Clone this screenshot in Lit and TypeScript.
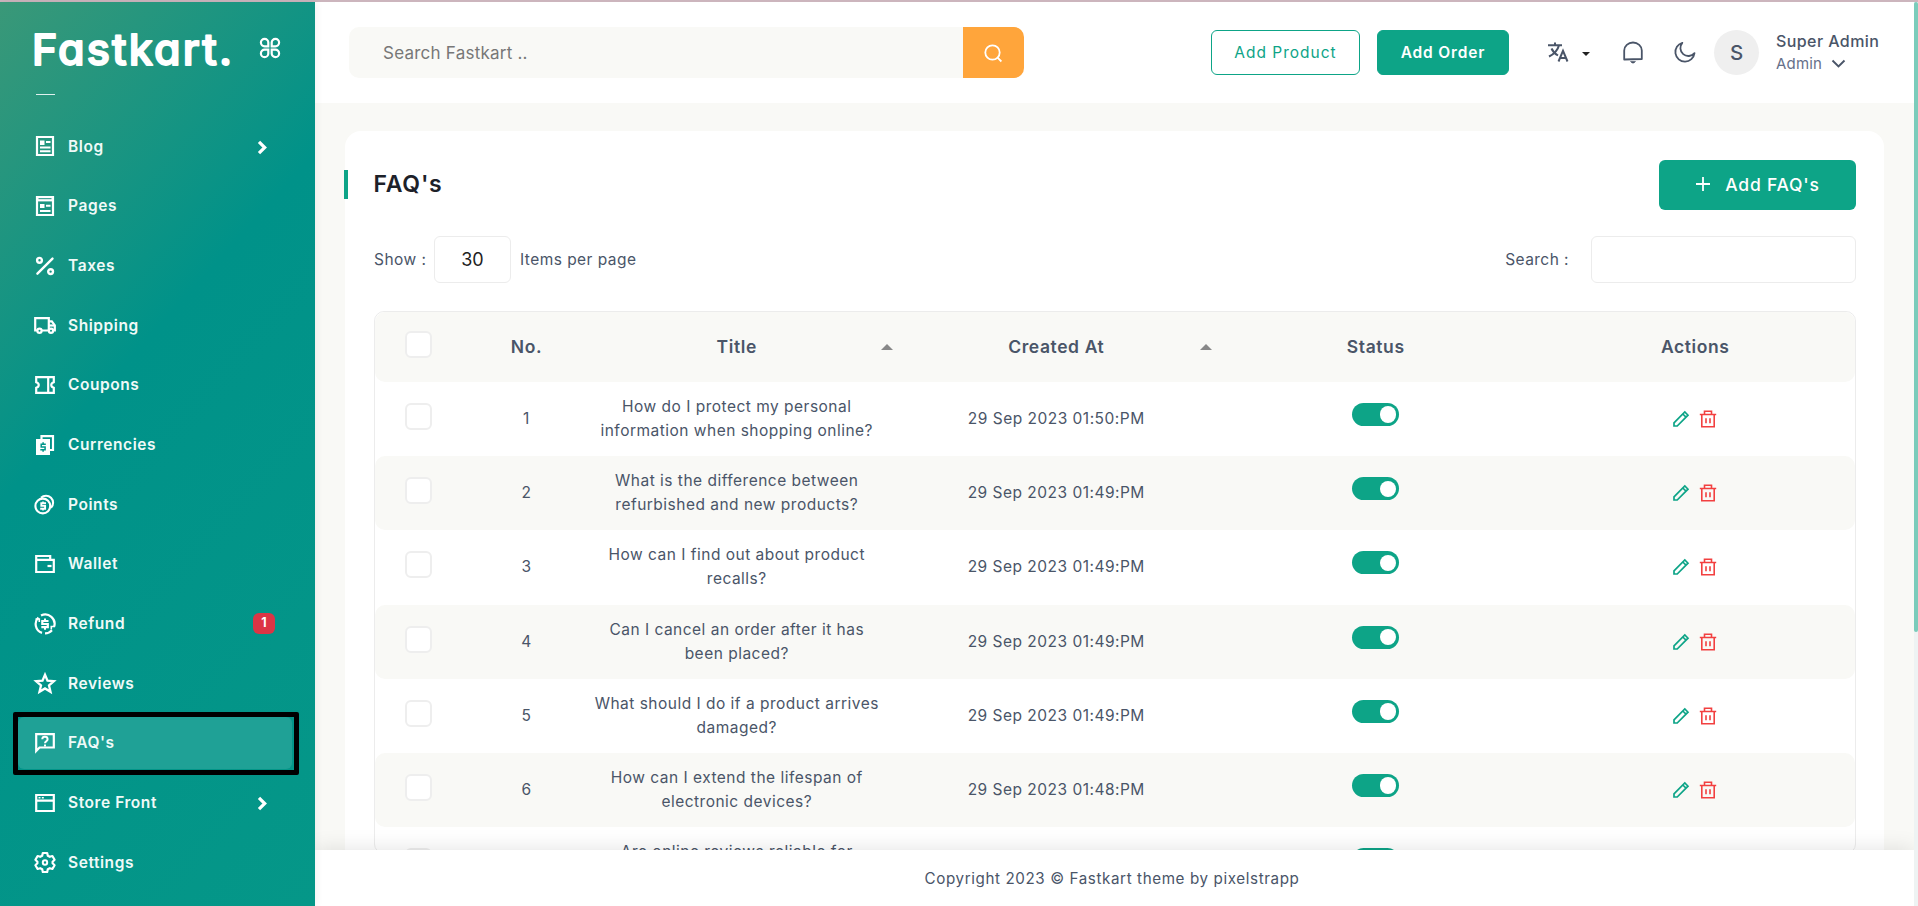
import { LitElement, html, css, svg } from "lit";
import { customElement } from "lit/decorators.js";

const doc = svg`<path d="M4 3h16v18H4z" fill="none" stroke="currentColor" stroke-width="2.2"/>`;
const icons: Record<string, unknown> = {
  blog: svg`${doc}<path d="M7 6.500h4.500V11H7zM13 7h4.500v2H13zM7 12.500h10.500v2H7zM7 16.200h10.500v2H7z" fill="currentColor"/>`,
  pages: svg`${doc}<path d="M4 4h16v3.400H4z" fill="currentColor"/><path d="M5.500 4.700h13" stroke="#159181" stroke-width="1"/><path d="M7 10h4.500v4H7zM13 10.800h4.500v2H13zM7 16h10.500v2H7z" fill="currentColor"/>`,
  taxes: svg`<g fill="none" stroke="currentColor" stroke-width="2.400"><path d="M4.400 19.700 19.500 4.600" stroke-linecap="round"/><circle cx="6.500" cy="6.300" r="2.400"/><circle cx="17.600" cy="17.600" r="2.400"/></g>`,
  shipping: svg`<g fill="none" stroke="currentColor" stroke-width="2.200"><path d="M4.500 17.500H2.200V5.200h13.600v12.300H8.500M15.800 8.300h3l3 4v5.200h-1.500"/><circle cx="6.500" cy="17.800" r="2.100"/><circle cx="18" cy="17.800" r="2.100"/><path d="M16 12.500h6"/></g>`,
  coupons: svg`<path d="M3.200 4.200h17.600v5c-3.400 1-3.400 4.600 0 5.600v5H3.200v-5c3.400-1 3.400-4.600 0-5.600zM15.200 4.500v15.500" fill="none" stroke="currentColor" stroke-width="2.200"/>`,
  currencies: svg`<path d="M8.500 6V3.200H20V17h-3" fill="none" stroke="currentColor" stroke-width="2.200"/><path d="M3 6h14v16H3z" fill="currentColor"/><path d="M12.800 11.300H8.200v2.700h3.900v2.700H7.300M10.100 9.300v2M10.100 16.700v2" fill="none" stroke="#00958a" stroke-width="1.500"/>`,
  points: svg`<g fill="none" stroke="currentColor" stroke-width="2.100"><circle cx="9.800" cy="14" r="7.400"/><path d="M8 5.800a7 7 0 1 1 10 10"/><path d="M13 11.200H8.300v2.700h3.800v2.800H7.200" stroke-width="1.900"/><path d="M10 9.500v2M10 16.500v2" stroke-width="1.500"/></g>`,
  wallet: svg`<g fill="none" stroke="currentColor" stroke-width="2.200"><path d="M3.200 8V4h14v4M3.200 7.800h17.600V20H3.200z"/><path d="M14.500 14h4"/></g>`,
  refund: svg`<g fill="none" stroke="currentColor" stroke-width="2.200"><path d="M9 20.900A9.300 9.300 0 0 1 5.400 5.500M8 3.600a9.300 9.300 0 0 1 13 11.400M19 18.300a9.300 9.300 0 0 1-7 3.100"/><path d="M15.500 9H9.300v3h5.500v3.200H8.300" stroke-width="2.200"/><path d="M12 6.500v2.500M12 15v2.700" stroke-width="2"/><path d="M2.500 7h3.800v3M21.800 14.500h-3.500v3" stroke-width="1.600"/></g>`,
  reviews: svg`<path d="m12 3.200 2.500 6 6.400.5-4.900 4.300 1.500 6.300-5.500-3.400-5.500 3.400 1.500-6.300L3.100 9.700l6.400-.5z" transform="translate(0 .5)" fill="none" stroke="currentColor" stroke-width="2.300"/>`,
  faq: svg`<path d="M3.200 20V3.200h17.600v13.300H6.500z" fill="none" stroke="currentColor" stroke-width="2.200"/><path d="M9.300 8.300c0-3.300 5.300-3.300 5.300 0 0 2-2.600 2-2.600 4M12 13.400v2" fill="none" stroke="currentColor" stroke-width="2"/>`,
  store: svg`<g fill="none" stroke="currentColor" stroke-width="2.200"><path d="M3.200 4h17.600v16H3.200zM3.200 9.700h17.600"/><path d="M5.500 6.800h2M8.800 6.800h2" stroke-width="1.500"/></g>`,
  settings: svg`<path d="m9.800 3-.6 2.700-2 1.100-2.600-.8-2.200 3.800 2 1.900v1.600l-2 1.900 2.200 3.800 2.600-.8 2 1.100.6 2.700h4.400l.6-2.700 2-1.100 2.600.8 2.200-3.800-2-1.900v-1.600l2-1.900L19.400 6l-2.600.8-2-1.100-.6-2.700z" fill="none" stroke="currentColor" stroke-width="2.200" stroke-linejoin="round"/><circle cx="12" cy="12.500" r="2.200" fill="none" stroke="currentColor" stroke-width="2"/>`,
};

const nav = [
  ["blog", "Blog", "arrow"], ["pages", "Pages"], ["taxes", "Taxes"], ["shipping", "Shipping"],
  ["coupons", "Coupons"], ["currencies", "Currencies"], ["points", "Points"], ["wallet", "Wallet"],
  ["refund", "Refund", "badge"], ["reviews", "Reviews"], ["faq", "FAQ's", "active"],
  ["store", "Store Front", "arrow"], ["settings", "Settings"],
];

const rows = [
  ["How do I protect my personal", "information when shopping online?", "29 Sep 2023 01:50:PM"],
  ["What is the difference between", "refurbished and new products?", "29 Sep 2023 01:49:PM"],
  ["How can I find out about product", "recalls?", "29 Sep 2023 01:49:PM"],
  ["Can I cancel an order after it has", "been placed?", "29 Sep 2023 01:49:PM"],
  ["What should I do if a product arrives", "damaged?", "29 Sep 2023 01:49:PM"],
  ["How can I extend the lifespan of", "electronic devices?", "29 Sep 2023 01:48:PM"],
  ["Are online reviews reliable for", "", ""],
];

@customElement("side-nav")
class SideNav extends LitElement {
  static styles = css`
    :host { display: block; width: 315px; height: 100%; box-sizing: border-box; color: #fff;
      background: linear-gradient(132deg, #3a9878 0%, #009289 40%, #059788 100%); }
    .head { display: flex; align-items: center; height: 92px; padding-left: 30px; box-sizing: border-box; }
    .logo { display: block; width: 206px; height: 56px; }
    .logo text { font: 500 43px Inter, sans-serif; font-feature-settings: "cv11"; fill: #fff; stroke: #fff; stroke-width: 1.800; stroke-linejoin: round; stroke-linecap: round; }
    .clover { width: 22px; height: 22px; margin-left: 23px; }
    .rule { width: 19px; height: 1px; background: #dff1ee; margin-left: 36px; }
    .list { padding: 25.500px 23px 0 18px; }
    .item { display: flex; align-items: center; height: 51.660px; margin-bottom: 8px; padding-left: 15px; border-radius: 6px; box-sizing: border-box; }
    .item.active { background: #1fa196; position: relative; }
    .item.active::after { content: ""; position: absolute; inset: -5px -7px -6px -5px; border: 5px solid #000; border-radius: 2px; }
    .ico { width: 24px; height: 24px; flex: none; }
    .label { flex: 1; margin-left: 11px; font: 600 15.500px Inter, sans-serif; letter-spacing: .57px; color: #f0faf8; }
    .chev { width: 11px; height: 15px; margin-right: 24px; margin-top: 2px; }
    .badge { width: 22px; height: 21px; border-radius: 6px; background: #dc3545; font: 700 12.500px/19px Inter, sans-serif; text-align: center; margin-right: 17px; }
  `;
  render() {
    return html`
      <div class="head">
        <svg class="logo" viewBox="0 0 206 56"><text x="2" y="45" textLength="200">Fastkart.</text></svg>
        <svg class="clover" viewBox="0 0 22 22" fill="none" stroke="currentColor" stroke-width="2.200">
          <path d="M9.300 9.300H5.600a3.700 3.700 0 1 1 3.700-3.700zM12.700 9.300h3.700a3.700 3.700 0 1 0-3.700-3.700zM9.300 12.700H5.600a3.700 3.700 0 1 0 3.700 3.700zM12.700 12.700h3.700a3.700 3.700 0 1 1-3.700 3.700z"/>
        </svg>
      </div>
      <div class="rule"></div>
      <div class="list">
        ${nav.map(([icon, label, extra]) => html`
          <div class="item ${extra === "active" ? "active" : ""}">
            <svg class="ico" viewBox="0 0 24 24">${icons[icon]}</svg>
            <span class="label">${label}</span>
            ${extra === "arrow" ? html`<svg class="chev" viewBox="0 0 11 15" fill="none" stroke="#fff" stroke-width="3.200"><path d="m2 1.800 5.700 5.700L2 13.200"/></svg>` : ""}
            ${extra === "badge" ? html`<span class="badge">1</span>` : ""}
          </div>`)}
      </div>`;
  }
}

@customElement("top-bar")
class TopBar extends LitElement {
  static styles = css`
    :host { display: flex; align-items: center; height: 101px; background: #fff; padding: 0 0 0 34px; color: #4a5568; font-family: Inter, sans-serif; box-sizing: border-box; }
    .search { display: flex; flex: none; width: 675px; height: 51px; border-radius: 10px; overflow: hidden; background: #f9f9f6; }
    .ph { flex: 1; padding-left: 34px; font-size: 17px; line-height: 52px; color: #777; letter-spacing: .23px; }
    .go { width: 61px; display: grid; place-items: center; background: #ffa53b; }
    .go svg { margin-left: -2px; }
    .btn { flex: none; height: 45px; box-sizing: border-box; border: 1px solid #0da487; border-radius: 6px; display: grid; place-items: center; font-size: 15.500px; letter-spacing: 1px; color: #0da487; }
    .product { width: 149px; margin-left: 187px; }
    .order { width: 132px; margin-left: 17px; background: #0da487; color: #fff; font-weight: 600; letter-spacing: .85px; }
    .lang { flex: none; width: 22px; height: 22px; margin: 0 0 2px 38px; }
    .caret { flex: none; width: 8px; height: 4px; margin-left: 13px; margin-top: 3px; }
    .bell { flex: none; width: 24px; height: 24px; margin-left: 31px; margin-bottom: 1px; }
    .moon { flex: none; width: 24px; height: 24px; margin-left: 28px; margin-bottom: 2px; }
    .avatar { flex: none; width: 45px; height: 45px; border-radius: 50%; background: #efefef; margin-left: 17px; display: grid; place-items: center; font-weight: 500; font-size: 20.500px; line-height: 43px; }
    .who { margin-left: 17px; white-space: nowrap; }
    .name { font-size: 16px; font-weight: 500; line-height: 22px; letter-spacing: .42px; }
    .role { display: flex; align-items: center; font-size: 15px; line-height: 24px; color: #66708a; letter-spacing: .2px; }
    .down { width: 15px; height: 9px; margin-left: 9px; margin-top: -1px; }
  `;
  render() {
    return html`
      <div class="search"><div class="ph">Search Fastkart ..</div>
        <div class="go"><svg width="20" height="20" viewBox="0 0 20 20" fill="none" stroke="#fff" stroke-width="1.800"><circle cx="9.500" cy="9.500" r="7.200"/><path d="m14.600 14.700 3.800 3.800"/></svg></div>
      </div>
      <div class="btn product">Add Product</div>
      <div class="btn order">Add Order</div>
      <svg class="lang" viewBox="0 0 22 22" fill="none" stroke="currentColor" stroke-width="2"><path d="M1 4.200h14M8 1.500v2.700M12 4.200C10.800 9 7 13 2 15.500M4.500 7.500C6 11 8.500 13 11 14.500M11.500 20.500 16 9.800l4.500 10.700M13 17h6"/></svg>
      <svg class="caret" viewBox="0 0 8 4"><path d="M0 0h8L4 4z" fill="#222"/></svg>
      <svg class="bell" viewBox="0 0 24 24" fill="none" stroke="currentColor" stroke-width="1.800"><path d="M3.200 19.500V10.500a8.800 8 0 0 1 17.600 0v8.500z" stroke-linejoin="round"/><path d="M9.500 21.500h5l-1.500 1.500h-2z" fill="currentColor" stroke-width=".6"/></svg>
      <svg class="moon" viewBox="0 0 24 24" fill="none" stroke="currentColor" stroke-width="1.800"><path d="M9.300 2.800A9.600 9.600 0 1 0 21.500 13.200 6.900 6.900 0 0 1 9.300 2.800z" stroke-linejoin="round"/></svg>
      <div class="avatar">S</div>
      <div class="who"><div class="name">Super Admin</div>
        <div class="role">Admin<svg class="down" viewBox="0 0 15 9" fill="none" stroke="#4a5568" stroke-width="1.900"><path d="m1.500 1.500 6 6 6-6"/></svg></div></div>`;
  }
}

@customElement("faq-table")
class FaqTable extends LitElement {
  static styles = css`
    :host { display: block; border: 1px solid #ececec; border-radius: 10px; overflow: hidden; color: #4a5568; font-family: Inter, sans-serif; }
    .row { display: grid; grid-template-columns: 101px 101px repeat(4, 1fr); height: 74.200px; align-items: center; text-align: center; font-size: 15.500px; letter-spacing: .49px; border-radius: 10px; }
    .row.even { background: #f9f9f6; }
    .row.th { height: 70px; background: #f9f9f6; font-size: 17.500px; font-weight: 600; letter-spacing: .6px; line-height: 22px; }
    .th .lab { padding-bottom: 1px; }
    .check { width: 27px; height: 27px; box-sizing: border-box; border: 2px solid #eee; border-radius: 6px; background: #fff; margin: -5px 0 0 30px; }
    .title { line-height: 24px; white-space: nowrap; }
    .val { padding-bottom: 1px; }
    .head { display: grid; grid-template-columns: 15px 1fr 15px; align-items: center; padding-bottom: 1px; }
    .head .t { grid-column: 2; }
    .sort { width: 12px; height: 6px; margin-left: -1px; }
    .switch { display: flex; justify-content: flex-end; align-items: center; width: 47px; height: 23px; box-sizing: border-box; padding-right: 3px; border-radius: 12px; background: #0da487; margin: -9px auto 0; }
    .knob { width: 16.500px; height: 16.500px; border-radius: 50%; background: #fff; }
    .acts { display: flex; justify-content: center; gap: 9px; padding-right: 2px; }
    .acts svg { width: 18px; height: 18px; }
    .part { height: 26px; overflow: hidden; align-items: start; }
    .part .check { margin-top: 20.500px; }
    .part .title { padding-top: 13px; }
    .part .switch { margin-top: 20.500px; }
  `;
  render() {
    const arrow = html`<svg class="sort" viewBox="0 0 12 6"><path d="M0 6 6 0l6 6z" fill="#888"/></svg>`;
    return html`
      <div class="row th"><span class="check"></span><span class="lab">No.</span>
        <span class="head"><span class="t">Title</span>${arrow}</span>
        <span class="head"><span class="t">Created At</span>${arrow}</span>
        <span class="lab">Status</span><span class="lab">Actions</span></div>
      ${rows.map((r, i) => html`
        <div class="row ${i % 2 ? "even" : ""} ${r[2] ? "" : "part"}"><span class="check"></span><span class="val">${r[2] ? i + 1 : ""}</span>
          <span class="title">${r[0]}${r[1] ? html`<br>${r[1]}` : ""}</span><span class="val">${r[2]}</span>
          <span class="switch"><span class="knob"></span></span>
          ${r[2] ? html`<span class="acts">
            <svg viewBox="0 0 18 18" fill="none" stroke="#0da487" stroke-width="1.700"><path d="M2 16v-3.200L12.800 2 16 5.200 5.200 16zM10.800 4 14 7.200"/></svg>
            <svg viewBox="0 0 18 18" fill="none" stroke="#f24040" stroke-width="1.600"><path d="M.8 4.500h16.400M2.800 4.500v12.300h12.400V4.500M5.500 4.500V1.200h7v3.300M7 8.300v5M11 8.300v5"/></svg>
          </span>` : ""}
        </div>`)}`;
  }
}

@customElement("app-root")
class AppRoot extends LitElement {
  static styles = css`
    :host { display: grid; grid-template: 2px 1fr / 315px 1fr 4px; width: 1918px; height: 906px; overflow: hidden; background: #f9f9f6; color: #4a5568; font-family: Inter, sans-serif; }
    .strip { grid-column: 1 / -1; background: #ccb5bd; }
    side-nav { box-shadow: 0 0 9px rgba(0, 0, 0, .07); z-index: 1; }
    .main { display: grid; grid-template-rows: 101px 1fr 56px; height: 904px; min-width: 0; }
    .body { overflow: hidden; padding: 28px 30px 0 30px; }
    .card { background: #fff; border-radius: 16px; padding: 29px 28px 0 29px; height: 800px; box-sizing: border-box; }
    .top { display: flex; align-items: center; justify-content: space-between; height: 50px; }
    .h { font-size: 23px; font-weight: 600; color: #1d2129; letter-spacing: .8px; border-left: 4px solid #0da487; margin: -2px 0 0 -30px; padding-left: 25.500px; line-height: 29px; }
    .add { display: flex; align-items: center; justify-content: center; width: 197px; height: 50px; box-sizing: border-box; padding-bottom: 2px; border-radius: 6px; background: #0da487; color: #fff; font-size: 17.500px; font-weight: 500; letter-spacing: .8px; gap: 14px; }
    .filters { display: flex; align-items: center; height: 47px; margin: 26px 0 28px; font-size: 15.500px; letter-spacing: .45px; }
    .box { flex: none; height: 47px; box-sizing: border-box; border: 1px solid #ececec; border-radius: 6px; }
    .show { width: 51px; white-space: nowrap; }
    .num { width: 77px; margin: 0 9px; text-align: center; line-height: 45px; font-size: 18px; color: #222; letter-spacing: 0; }
    .find { margin-left: auto; }
    .q { width: 265px; margin-left: 22px; }
    .foot { display: grid; place-items: center; background: #fff; box-shadow: 0 0 22px rgba(0, 0, 0, .12); position: relative; font-size: 15.200px; letter-spacing: .6px; padding-right: 5px; clip-path: inset(-30px 0 0 0); }
    .track { background: #eef3f3; }
    .thumb { height: 630px; background: #7bccbb; border-radius: 4px; }
  `;
  render() {
    return html`
      <div class="strip"></div>
      <side-nav></side-nav>
      <div class="main">
        <top-bar></top-bar>
        <div class="body"><div class="card">
          <div class="top"><div class="h">FAQ's</div>
            <div class="add"><svg width="16" height="16" viewBox="0 0 16 16" stroke="#fff" stroke-width="1.800"><path d="M8 1v14M1 8h14"/></svg>Add FAQ's</div></div>
          <div class="filters"><span class="show">Show :</span><div class="box num">30</div><span>Items per page</span>
            <span class="find">Search :</span><div class="box q"></div></div>
          <faq-table></faq-table>
        </div></div>
        <div class="foot">Copyright 2023 © Fastkart theme by pixelstrapp</div>
      </div>
      <div class="track"><div class="thumb"></div></div>`;
  }
}
